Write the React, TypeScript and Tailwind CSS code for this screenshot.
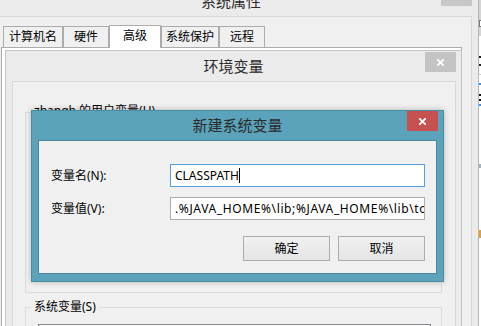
import React from "react";

function CloseX({ size = 9 }: { size?: number }) {
  return (
    <svg width={size} height={size} viewBox="0 0 10 10">
      <path d="M1.5 1.5L8.5 8.5M8.5 1.5L1.5 8.5" stroke="white" strokeWidth="2" />
    </svg>
  );
}

const tabs = [
  { label: "计算机名", w: "w-[60px]", active: false },
  { label: "硬件", w: "w-[46px]", active: false },
  { label: "高级", w: "w-[52px]", active: true },
  { label: "系统保护", w: "w-[58px]", active: false },
  { label: "远程", w: "w-[46px]", active: false },
];

export default function App() {
  return (
    <div className="relative w-[481px] h-[326px] overflow-hidden bg-[#f0f0f0] text-[12px] text-black font-['Noto_Sans','Noto_Sans_CJK_SC',sans-serif]">
      {/* 系统属性 window */}
      <div className="absolute left-[-8px] top-[-14px] w-[486px] h-[360px] bg-[#ebebeb] flex flex-col">
        <div className="relative shrink-0 h-[30px] flex items-center justify-center pr-[8px]">
          <span className="text-[15px] text-[#2b2b2b] leading-none">系统属性</span>
          <div className="absolute top-0 right-[6px] w-[31px] h-[20px] bg-[#c7c7c7] flex items-center justify-center">
            <CloseX />
          </div>
        </div>
        <div className="flex-1 min-h-0 overflow-hidden ml-[7px] mr-[6px] border border-[#d9d9d9] bg-[#f0f0f0]">
          <div className="flex items-end ml-[3px] mt-[8px]">
            {tabs.map((t) =>
              t.active ? (
                <div
                  key={t.label}
                  className={`${t.w} h-[23px] -mb-px relative z-10 bg-white border border-b-0 border-[#acacac] flex items-center justify-center pb-[3px]`}
                >
                  {t.label}
                </div>
              ) : (
                <div
                  key={t.label}
                  className={`${t.w} h-[21px] bg-[#f0f0f0] border border-b-0 border-[#acacac] flex items-center justify-center`}
                >
                  {t.label}
                </div>
              )
            )}
          </div>
          <div className="ml-[1px] w-[461px] h-[300px] bg-white border border-[#acacac]" />
        </div>
      </div>

      {/* window at the far right, behind */}
      <div className="absolute left-[478px] top-0 w-[10px] h-full bg-white border-l border-[#b5b5b5] flex flex-col">
        <div className="shrink-0 h-[36px] bg-[#d5d5d5] flex flex-col pt-[20px]">
          <div className="h-[7px] border border-[#777] bg-white" />
        </div>
        <div className="shrink-0 mt-[20px] h-[2px] bg-[#1a1a1a]" />
        <div className="shrink-0 mt-[6px] h-[2px] bg-[#222]" />
        <div className="shrink-0 mt-[8px] h-px bg-[#c8c8c8]" />
        <div className="shrink-0 mt-[8px] h-[2px] bg-[#3d8fe0]" />
        <div className="shrink-0 mt-[9px] h-[2px] bg-[#111]" />
        <div className="shrink-0 mt-[3px] h-[2px] bg-[#111]" />
        <div className="shrink-0 mt-[3px] h-[2px] bg-[#3d8fe0]" />
        <div className="shrink-0 mt-[58px] h-[4px] bg-[#9ab4c8]" />
        <div className="shrink-0 mt-[62px] h-[8px] w-[3px] bg-[#e0a040]" />
      </div>

      {/* 环境变量 window */}
      <div className="absolute left-[5px] top-[50px] w-[457px] h-[290px] bg-[#ebebeb] border border-[#c4c4c4] flex flex-col">
        <div className="relative shrink-0 h-[30px] flex items-center justify-center">
          <span className="text-[15px] text-[#2b2b2b] leading-none">环境变量</span>
          <div className="absolute top-[1px] right-[5px] w-[31px] h-[20px] bg-[#c4c4c4] flex items-center justify-center">
            <CloseX />
          </div>
        </div>
        <div className="flex-1 min-h-0 overflow-hidden ml-[6px] mr-[5px] border border-[#d9d9d9] bg-[#f0f0f0]">
          <div className="relative ml-[12px] mt-[30px] w-[417px] h-[181px] border border-[#dcdcdc]">
            <span className="absolute left-[5px] -top-[11px] px-[3px] bg-[#f0f0f0] leading-[18px]">
              zhangh 的用户变量(U)
            </span>
            <div className="ml-[12px] mt-[16px] w-[393px] h-[120px] bg-white border border-[#828790]" />
          </div>
          <div className="relative ml-[12px] mt-[14px] w-[417px] h-[120px] border border-[#dcdcdc]">
            <span className="absolute left-[5px] -top-[10px] px-[3px] bg-[#f0f0f0] leading-[18px]">
              系统变量(S)
            </span>
            <div className="ml-[12px] mt-[16px] w-[393px] h-[100px] bg-white border border-[#828790]" />
          </div>
        </div>
      </div>

      {/* 新建系统变量 dialog */}
      <div className="absolute left-[31px] top-[110px] w-[413px] h-[172px] bg-[#5ba3bb] border border-[#4a8ca3] flex flex-col shadow-[0_0_6px_rgba(0,0,0,0.25)]">
        <div className="relative shrink-0 h-[29px] flex items-center justify-center">
          <span className="text-[15px] text-[#2b2b2b] leading-none">新建系统变量</span>
          <div className="absolute top-0 right-[5px] w-[31px] h-[20px] bg-[#c75050] flex items-center justify-center">
            <CloseX />
          </div>
        </div>
        <div className="flex-1 mx-[6px] mb-[7px] border border-[#4d8599] bg-[#f0f0f0] flex flex-col pt-[23px] pl-[12px] pr-[11px]">
          <div className="flex items-center h-[23px]">
            <div className="w-[119px]">变量名(N):</div>
            <div className="w-[255px] h-[23px] bg-white border border-[#569de5] flex items-center pl-[4px]">
              <span>CLASSPATH</span>
              <span className="w-px h-[15px] bg-black" />
            </div>
          </div>
          <div className="flex items-center h-[23px] mt-[10px]">
            <div className="w-[119px]">变量值(V):</div>
            <div className="w-[255px] h-[23px] bg-white border border-[#abadb3] flex items-center pl-[4px] overflow-hidden whitespace-nowrap tracking-[0.62px]">
              .%JAVA_HOME%\lib;%JAVA_HOME%\lib\tools.jar
            </div>
          </div>
          <div className="flex justify-end gap-[8px] mt-[16px]">
            <div className="w-[87px] h-[25px] bg-linear-to-b from-[#f0f0f0] to-[#e5e5e5] border border-[#acacac] flex items-center justify-center">
              确定
            </div>
            <div className="w-[87px] h-[25px] bg-linear-to-b from-[#f0f0f0] to-[#e5e5e5] border border-[#acacac] flex items-center justify-center">
              取消
            </div>
          </div>
        </div>
      </div>
    </div>
  );
}
